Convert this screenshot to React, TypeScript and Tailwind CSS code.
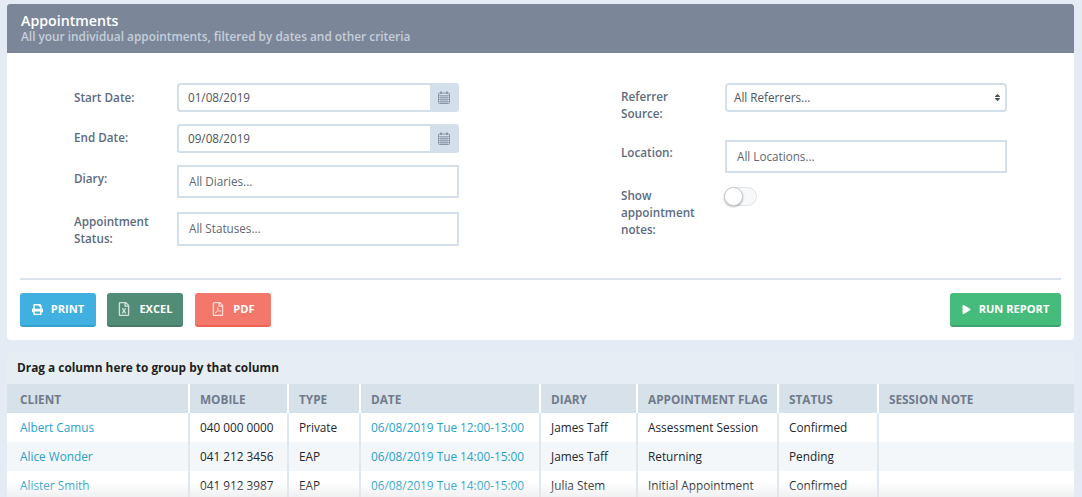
import { FaPlay, FaPrint, FaRegFileExcel, FaRegFilePdf, FaSort } from 'react-icons/fa'

const columns = [
    { name: 'CLIENT', width: 'w-[183px]' },
    { name: 'MOBILE', width: 'w-[99px]' },
    { name: 'TYPE', width: 'w-[72px]' },
    { name: 'DATE', width: 'w-[180px]' },
    { name: 'DIARY', width: 'w-[97px]' },
    { name: 'APPOINTMENT FLAG', width: 'w-[141px]' },
    { name: 'STATUS', width: 'w-[100px]' },
    { name: 'SESSION NOTE', width: 'flex-1' },
]

const rows = [
    ['Albert Camus', '040 000 0000', 'Private', '06/08/2019 Tue 12:00-13:00', 'James Taff', 'Assessment Session', 'Confirmed', ''],
    ['Alice Wonder', '041 212 3456', 'EAP', '06/08/2019 Tue 14:00-15:00', 'James Taff', 'Returning', 'Pending', ''],
    ['Alister Smith', '041 912 3987', 'EAP', '06/08/2019 Tue 14:00-15:00', 'Julia Stem', 'Initial Appointment', 'Confirmed', ''],
]

function CalendarIcon() {
    return (
        <svg width="12" height="13" viewBox="0 0 12 13" fill="none" stroke="#7b8799" strokeWidth="0.8">
            <rect x="0.5" y="2" width="11" height="10.5" rx="1" />
            <path d="M0.5 4.6h11M0.5 6.6h11M0.5 8.6h11M0.5 10.6h11M3 4.6v8M5 4.6v8M7 4.6v8M9 4.6v8" strokeWidth="0.6" />
            <path d="M3 0.6v2.4M9 0.6v2.4" strokeWidth="1.4" />
        </svg>
    )
}

function DateField({ value }: { value: string }) {
    return (
        <div className="flex h-[29px] w-[282px] rounded-[3px] border-2 border-[#d3dfea] bg-[#d3dfea]">
            <div className="flex flex-1 items-center rounded-l-[2px] bg-white pl-[9px] text-[11.7px] text-[#4d5560]">{value}</div>
            <div className="flex w-[27px] items-center justify-center">
                <CalendarIcon />
            </div>
        </div>
    )
}

function TextField({ placeholder, className }: { placeholder: string; className: string }) {
    return (
        <div className={`flex w-[282px] items-center border-2 border-[#d3dfea] bg-white text-[11.7px] text-[#5f6772] ${className}`}>
            {placeholder}
        </div>
    )
}

function Label({ children, className = '' }: { children: React.ReactNode; className?: string }) {
    return <div className={`text-[11.7px] leading-[17px] font-semibold text-[#5d6b80] ${className}`}>{children}</div>
}

function ActionButton({ icon, label, className }: { icon: React.ReactNode; label: string; className: string }) {
    return (
        <button className={`flex h-[34px] items-center justify-center gap-[8px] rounded-[3px] border-b-2 text-[11.1px] font-bold text-white ${className}`}>
            {icon}
            {label}
        </button>
    )
}

export default function App() {
    return (
        <div className="h-[497px] w-[1082px] overflow-hidden bg-[#e4ebf5] pt-1 pl-[7px] font-['Open_Sans',sans-serif]">
            <div className="w-[1067px] rounded-b-[4px] bg-white">
                {/* Title */}
                <div className="h-[49px] rounded-t-[3px] bg-[#7b8799] px-[14px] pt-[8px]">
                    <div className="text-[14.2px] leading-[17px] font-semibold text-white">Appointments</div>
                    <div className="text-[11.85px] leading-[15px] font-semibold text-[#c6ced9]">
                        All your individual appointments, filtered by dates and other criteria
                    </div>
                </div>

                {/* Filters */}
                <div className="flex h-[225px] pt-[30px]">
                    <div className="ml-[67px] w-[547px]">
                        <div className="flex h-[41px]">
                            <Label className="w-[104px] -mr-[1px] pt-[6px]">Start Date:</Label>
                            <DateField value="01/08/2019" />
                        </div>
                        <div className="flex h-[41px]">
                            <Label className="w-[104px] -mr-[1px] pt-[5px]">End Date:</Label>
                            <DateField value="09/08/2019" />
                        </div>
                        <div className="flex h-[47px]">
                            <Label className="w-[104px] -mr-[1px] pt-[5px]">Diary:</Label>
                            <TextField placeholder="All Diaries..." className="h-[33px] pl-[10px]" />
                        </div>
                        <div className="flex">
                            <Label className="w-[104px] -mr-[1px] pt-[1px]">
                                Appointment
                                <br />
                                Status:
                            </Label>
                            <TextField placeholder="All Statuses..." className="h-[34px] pl-[10px]" />
                        </div>
                    </div>
                    <div>
                        <div className="flex h-[57px]">
                            <Label className="w-[104px] pt-[5px]">
                                Referrer
                                <br />
                                Source:
                            </Label>
                            <div className="flex h-[29px] w-[282px] items-center justify-between rounded-[4px] border-2 border-[#d3dfea] bg-white pr-[3px] pl-[7px] text-[11.7px] text-[#4d5560]">
                                All Referrers...
                                <FaSort size={9} className="text-[#4d5560]" />
                            </div>
                        </div>
                        <div className="flex h-[46px]">
                            <Label className="w-[104px] pt-[4px]">Location:</Label>
                            <TextField placeholder="All Locations..." className="h-[33px] pl-[10px]" />
                        </div>
                        <div className="flex">
                            <Label className="w-[103px] pt-[1px]">
                                Show
                                <br />
                                appointment
                                <br />
                                notes:
                            </Label>
                            <div className="relative mt-[1px] h-[19px] w-[33px] rounded-full border border-[#e1e5ea] bg-[#f7f8fa]">
                                <div className="absolute top-[-1px] left-[-1px] h-[19px] w-[19px] rounded-full border border-[#c9ced4] bg-white shadow-[0_1px_2px_rgba(0,0,0,0.3)]" />
                            </div>
                        </div>
                    </div>
                </div>

                {/* Actions */}
                <div className="mx-[13px] border-t-2 border-[#dbe4ec] pt-[13px] pb-[13px]">
                    <div className="flex items-center">
                        <ActionButton
                            icon={<FaPrint size={11} />}
                            label="PRINT"
                            className="w-[76px] border-[#36a0cd] bg-[#3fb0e0]"
                        />
                        <ActionButton
                            icon={<FaRegFileExcel size={14} className="text-[#d5e2dc]" />}
                            label="EXCEL"
                            className="ml-[11px] w-[76px] border-[#457a66] bg-[#508c76]"
                        />
                        <ActionButton
                            icon={<FaRegFilePdf size={14} className="text-[#fbdcd8]" />}
                            label="PDF"
                            className="ml-[12px] w-[76px] border-[#ee6355] bg-[#f4776b]"
                        />
                        <ActionButton
                            icon={<FaPlay size={9} />}
                            label="RUN REPORT"
                            className="ml-auto w-[111px] border-[#3ea46f] bg-[#46bc7c]"
                        />
                    </div>
                </div>
            </div>

            {/* Grid */}
            <div className="relative mt-3 w-[1067px] overflow-hidden rounded-t-[4px] bg-[#e7eef3]">
                <div className="flex h-[32px] items-center pl-[10px] text-[11.85px] font-bold text-[#1d1f22]">
                    Drag a column here to group by that column
                </div>
                <div className="flex h-[29px] bg-[#d7e1e9]">
                    {columns.map((col, i) => (
                        <div
                            key={col.name}
                            className={`flex items-center border-white pt-[2px] text-[11.8px] font-bold text-[#6f7b8c] ${col.width} ${i === 0 ? 'pl-[13px]' : 'pl-[10px]'} ${i < columns.length - 1 ? 'border-r-2' : ''}`}
                        >
                            {col.name}
                        </div>
                    ))}
                </div>
                {rows.map((row, r) => (
                    <div key={r} className={`flex h-[29px] ${r % 2 === 0 ? 'bg-white' : 'bg-[#f3f7fa]'}`}>
                        {row.map((cell, i) => (
                            <div
                                key={i}
                                className={`flex items-center border-[#dfe8ef] text-[11.8px] ${columns[i].width} ${i === 0 ? 'pl-[13px]' : 'pl-[10px]'} ${i < row.length - 1 ? 'border-r-2' : ''} ${i === 0 || i === 3 ? 'text-[#2a9fcb]' : 'text-[#23262a]'}`}
                            >
                                {cell}
                            </div>
                        ))}
                    </div>
                ))}
                <div className="absolute right-0 bottom-0 left-0 h-[18px] bg-gradient-to-b from-transparent to-[#e4e6e8]/70" />
            </div>
        </div>
    )
}
